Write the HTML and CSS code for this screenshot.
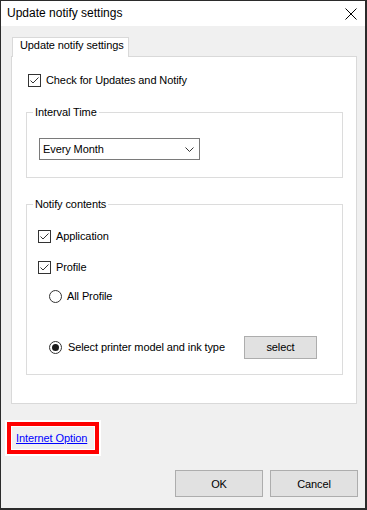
FILE: index.html
```html
<!DOCTYPE html>
<html>
<head>
<meta charset="utf-8">
<link rel="stylesheet" href="styles.css">
</head>
<body>
<div class="window">
  <div class="titlebar">
    <span class="title">Update notify settings</span>
    <svg class="close" width="12" height="12" viewBox="0 0 12 12"><path d="M0.5 0.5 L11.5 11.5 M11.5 0.5 L0.5 11.5" stroke="#000" stroke-width="1" fill="none"/></svg>
  </div>
  <div class="content">
    <div class="tab">Update notify settings</div>
    <div class="panel">
      <div class="check-row main-check">
        <span class="cb"><svg width="11" height="11" viewBox="0 0 11 11"><path d="M1.5 5.5 L4 8 L9.5 2.5" stroke="#333" stroke-width="1" fill="none"/></svg></span>
        <span class="txt">Check for Updates and Notify</span>
      </div>
      <div class="group interval">
        <span class="group-label">Interval Time</span>
        <div class="select">
          <span class="txt">Every Month</span>
          <svg width="9" height="5" viewBox="0 0 9 5"><path d="M0.5 0.5 L4.5 4.5 L8.5 0.5" stroke="#333" stroke-width="1" fill="none"/></svg>
        </div>
      </div>
      <div class="group notify">
        <span class="group-label">Notify contents</span>
        <div class="check-row">
          <span class="cb"><svg width="11" height="11" viewBox="0 0 11 11"><path d="M1.5 5.5 L4 8 L9.5 2.5" stroke="#333" stroke-width="1" fill="none"/></svg></span>
          <span class="txt">Application</span>
        </div>
        <div class="check-row profile">
          <span class="cb"><svg width="11" height="11" viewBox="0 0 11 11"><path d="M1.5 5.5 L4 8 L9.5 2.5" stroke="#333" stroke-width="1" fill="none"/></svg></span>
          <span class="txt">Profile</span>
        </div>
        <div class="radio-row all">
          <span class="radio"></span>
          <span class="txt">All Profile</span>
        </div>
        <div class="radio-row sel">
          <span class="radio on"></span>
          <span class="txt radio-text">Select printer model and ink type</span>
          <span class="btn small">select</span>
        </div>
      </div>
    </div>
    <div class="link-box"><a class="link" href="#">Internet Option</a></div>
    <div class="actions">
      <span class="btn">OK</span>
      <span class="btn">Cancel</span>
    </div>
  </div>
</div>
</body>
</html>
```
FILE: styles.css
```css
html, body {
  margin: 0;
  padding: 0;
  background: #ffffff;
}
body {
  font-family: "Liberation Sans", Arial, sans-serif;
  font-size: 11px;
  color: #000;
}
.window {
  width: 367px;
  height: 510px;
  box-sizing: border-box;
  border-style: solid;
  border-color: #2b2b2b;
  border-width: 1px 2px 2px 1px;
  display: flex;
  flex-direction: column;
  background: #f0f0f0;
}
.titlebar {
  height: 25px;
  background: #fff;
  display: flex;
  align-items: center;
  justify-content: space-between;
  padding: 0 8px 0 6px;
  flex: none;
}
.title {
  font-size: 12px;
  line-height: 25px;
}
.close {
  display: block;
  margin-top: 1px;
}
.content {
  flex: 1;
  padding: 11px 8px 0 10px;
  display: flex;
  flex-direction: column;
}
.txt {
  letter-spacing: -0.1px;
  white-space: nowrap;
}
.tab {
  position: relative;
  z-index: 1;
  width: 117px;
  height: 20px;
  box-sizing: border-box;
  margin-left: 1px;
  background: #fff;
  border: 1px solid #d9d9d9;
  border-bottom: none;
  padding-left: 7px;
  line-height: 15px;
  letter-spacing: -0.1px;
}
.panel {
  margin-top: -1px;
  height: 348px;
  box-sizing: border-box;
  border: 1px solid #d9d9d9;
  background: #fff;
  display: flex;
  flex-direction: column;
}
.check-row {
  display: flex;
  align-items: center;
  gap: 5px;
  height: 13px;
  line-height: 13px;
}
.main-check {
  margin: 17px 0 0 16px;
}
.cb {
  width: 13px;
  height: 13px;
  box-sizing: border-box;
  border: 1px solid #333;
  background: #fff;
  display: flex;
  align-items: center;
  justify-content: center;
  flex: none;
}
.cb svg {
  display: block;
}
.group {
  position: relative;
  box-sizing: border-box;
  border: 1px solid #dcdcdc;
  margin-left: 14px;
  width: 317px;
}
.group-label {
  position: absolute;
  top: -8px;
  left: 6px;
  padding: 0 2px;
  background: #fff;
  line-height: 15px;
  letter-spacing: -0.1px;
}
.interval {
  margin-top: 25px;
  height: 66px;
  padding: 25px 0 0 12px;
}
.select {
  width: 161px;
  height: 22px;
  box-sizing: border-box;
  border: 1px solid #7a7a7a;
  display: flex;
  align-items: center;
  justify-content: space-between;
  padding: 0 5px 0 3px;
  background: #fff;
}
.select svg {
  display: block;
  margin-top: 1px;
}
.notify {
  margin-top: 26px;
  height: 171px;
  padding: 25px 0 0 11px;
  display: flex;
  flex-direction: column;
}
.profile {
  margin-top: 18px;
}
.radio-row {
  display: flex;
  align-items: center;
  gap: 5px;
  padding-left: 11px;
  line-height: 13px;
}
.radio-row.all {
  margin-top: 16px;
  height: 13px;
}
.radio-row.sel {
  margin-top: 33px;
  height: 23px;
}
.radio {
  width: 13px;
  height: 13px;
  box-sizing: border-box;
  border: 1px solid #333;
  border-radius: 50%;
  background: #fff;
  flex: none;
  display: flex;
  align-items: center;
  justify-content: center;
}
.radio.on::after {
  content: "";
  width: 7px;
  height: 7px;
  border-radius: 50%;
  background: #1a1a1a;
}
.radio-text {
  flex: 0 0 171px;
  margin-left: 1px;
}
.btn {
  display: flex;
  align-items: center;
  justify-content: center;
  box-sizing: border-box;
  width: 88px;
  height: 27px;
  background: #e1e1e1;
  border: 1px solid #adadad;
  letter-spacing: -0.1px;
}
.btn.small {
  width: 73px;
  height: 23px;
}
.link-box {
  margin: 18px 0 0 -4px;
  width: 92px;
  height: 32px;
  box-sizing: border-box;
  border: 4px solid #ff0000;
  box-shadow: 0 0 0 2px #fff, inset 0 0 0 1px #fff;
  padding-left: 5px;
  line-height: 24px;
}
.link {
  color: #0000ff;
  text-decoration: underline;
  letter-spacing: -0.1px;
}
.actions {
  margin: 16px -1px 0 0;
  display: flex;
  justify-content: flex-end;
  gap: 7px;
}
```
